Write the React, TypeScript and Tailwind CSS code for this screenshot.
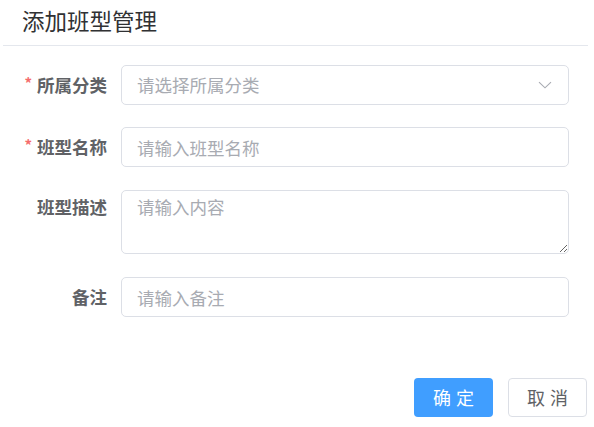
import { useState } from 'react'

const font = { fontFamily: '"Noto Sans CJK SC", "Noto Sans", sans-serif' }

function Label({ text, required }: { text: string; required?: boolean }) {
  return (
    <div className="w-[121px] shrink-0 pr-[14px] flex justify-end items-center text-[17.5px] font-bold text-[#606266]">
      {required && <span className="text-[#f56c6c] text-[15px] mr-[5px] -mt-[4px]">*</span>}
      {text}
    </div>
  )
}

export default function App() {
  const [name, setName] = useState('')
  const [desc, setDesc] = useState('')
  const [note, setNote] = useState('')

  const inputCls =
    'w-[448px] h-[40px] border border-[#dcdfe6] rounded-[5px] px-[15px] text-[17.5px] text-[#606266] placeholder:text-[#a8abb2] outline-none bg-white'

  return (
    <div className="w-[594px] h-[427px] bg-white" style={font}>
      <div className="h-[45px] pl-[22px] flex items-center text-[22.5px] text-[#303133] leading-none pb-[4px]">
        添加班型管理
      </div>
      <div className="h-px bg-[#e4e7ed] ml-[3px] mr-[6px]" />

      <div className="mt-[19px] flex flex-col">
        <div className="flex items-center">
          <Label text="所属分类" required />
          <button className="w-[448px] h-[40px] border border-[#dcdfe6] rounded-[5px] pl-[15px] pr-[16px] flex items-center justify-between bg-white">
            <span className="text-[17.5px] text-[#a8abb2]">请选择所属分类</span>
            <svg width="14" height="8" viewBox="0 0 14 8" fill="none">
              <path d="M1 1.2l6 5.6 6-5.6" stroke="#a8abb2" strokeWidth="1.1" />
            </svg>
          </button>
        </div>

        <div className="flex items-center mt-[22px]">
          <Label text="班型名称" required />
          <input className={inputCls} placeholder="请输入班型名称" value={name} onChange={e => setName(e.target.value)} />
        </div>

        <div className="flex items-start mt-[23px]">
          <div className="pt-[4px]"><Label text="班型描述" /></div>
          <textarea
            className="w-[448px] h-[64px] border border-[#dcdfe6] rounded-[5px] px-[15px] py-[3px] text-[17.5px] leading-[26px] text-[#606266] placeholder:text-[#a8abb2] outline-none bg-white"
            placeholder="请输入内容"
            value={desc}
            onChange={e => setDesc(e.target.value)}
          />
        </div>

        <div className="flex items-center mt-[23px]">
          <Label text="备注" />
          <input className={inputCls} placeholder="请输入备注" value={note} onChange={e => setNote(e.target.value)} />
        </div>
      </div>

      <div className="mt-[61px] pr-[7px] flex justify-end gap-[15px]">
        <button className="w-[79px] h-[39px] rounded-[4px] bg-[#409eff] text-white text-[18px] flex items-center justify-center">
          <span className="tracking-[5px] mr-[-5px]">确定</span>
        </button>
        <button className="w-[79px] h-[39px] rounded-[4px] border border-[#dcdfe6] bg-white text-[#606266] text-[18px] flex items-center justify-center">
          <span className="tracking-[5px] mr-[-5px]">取消</span>
        </button>
      </div>
    </div>
  )
}
